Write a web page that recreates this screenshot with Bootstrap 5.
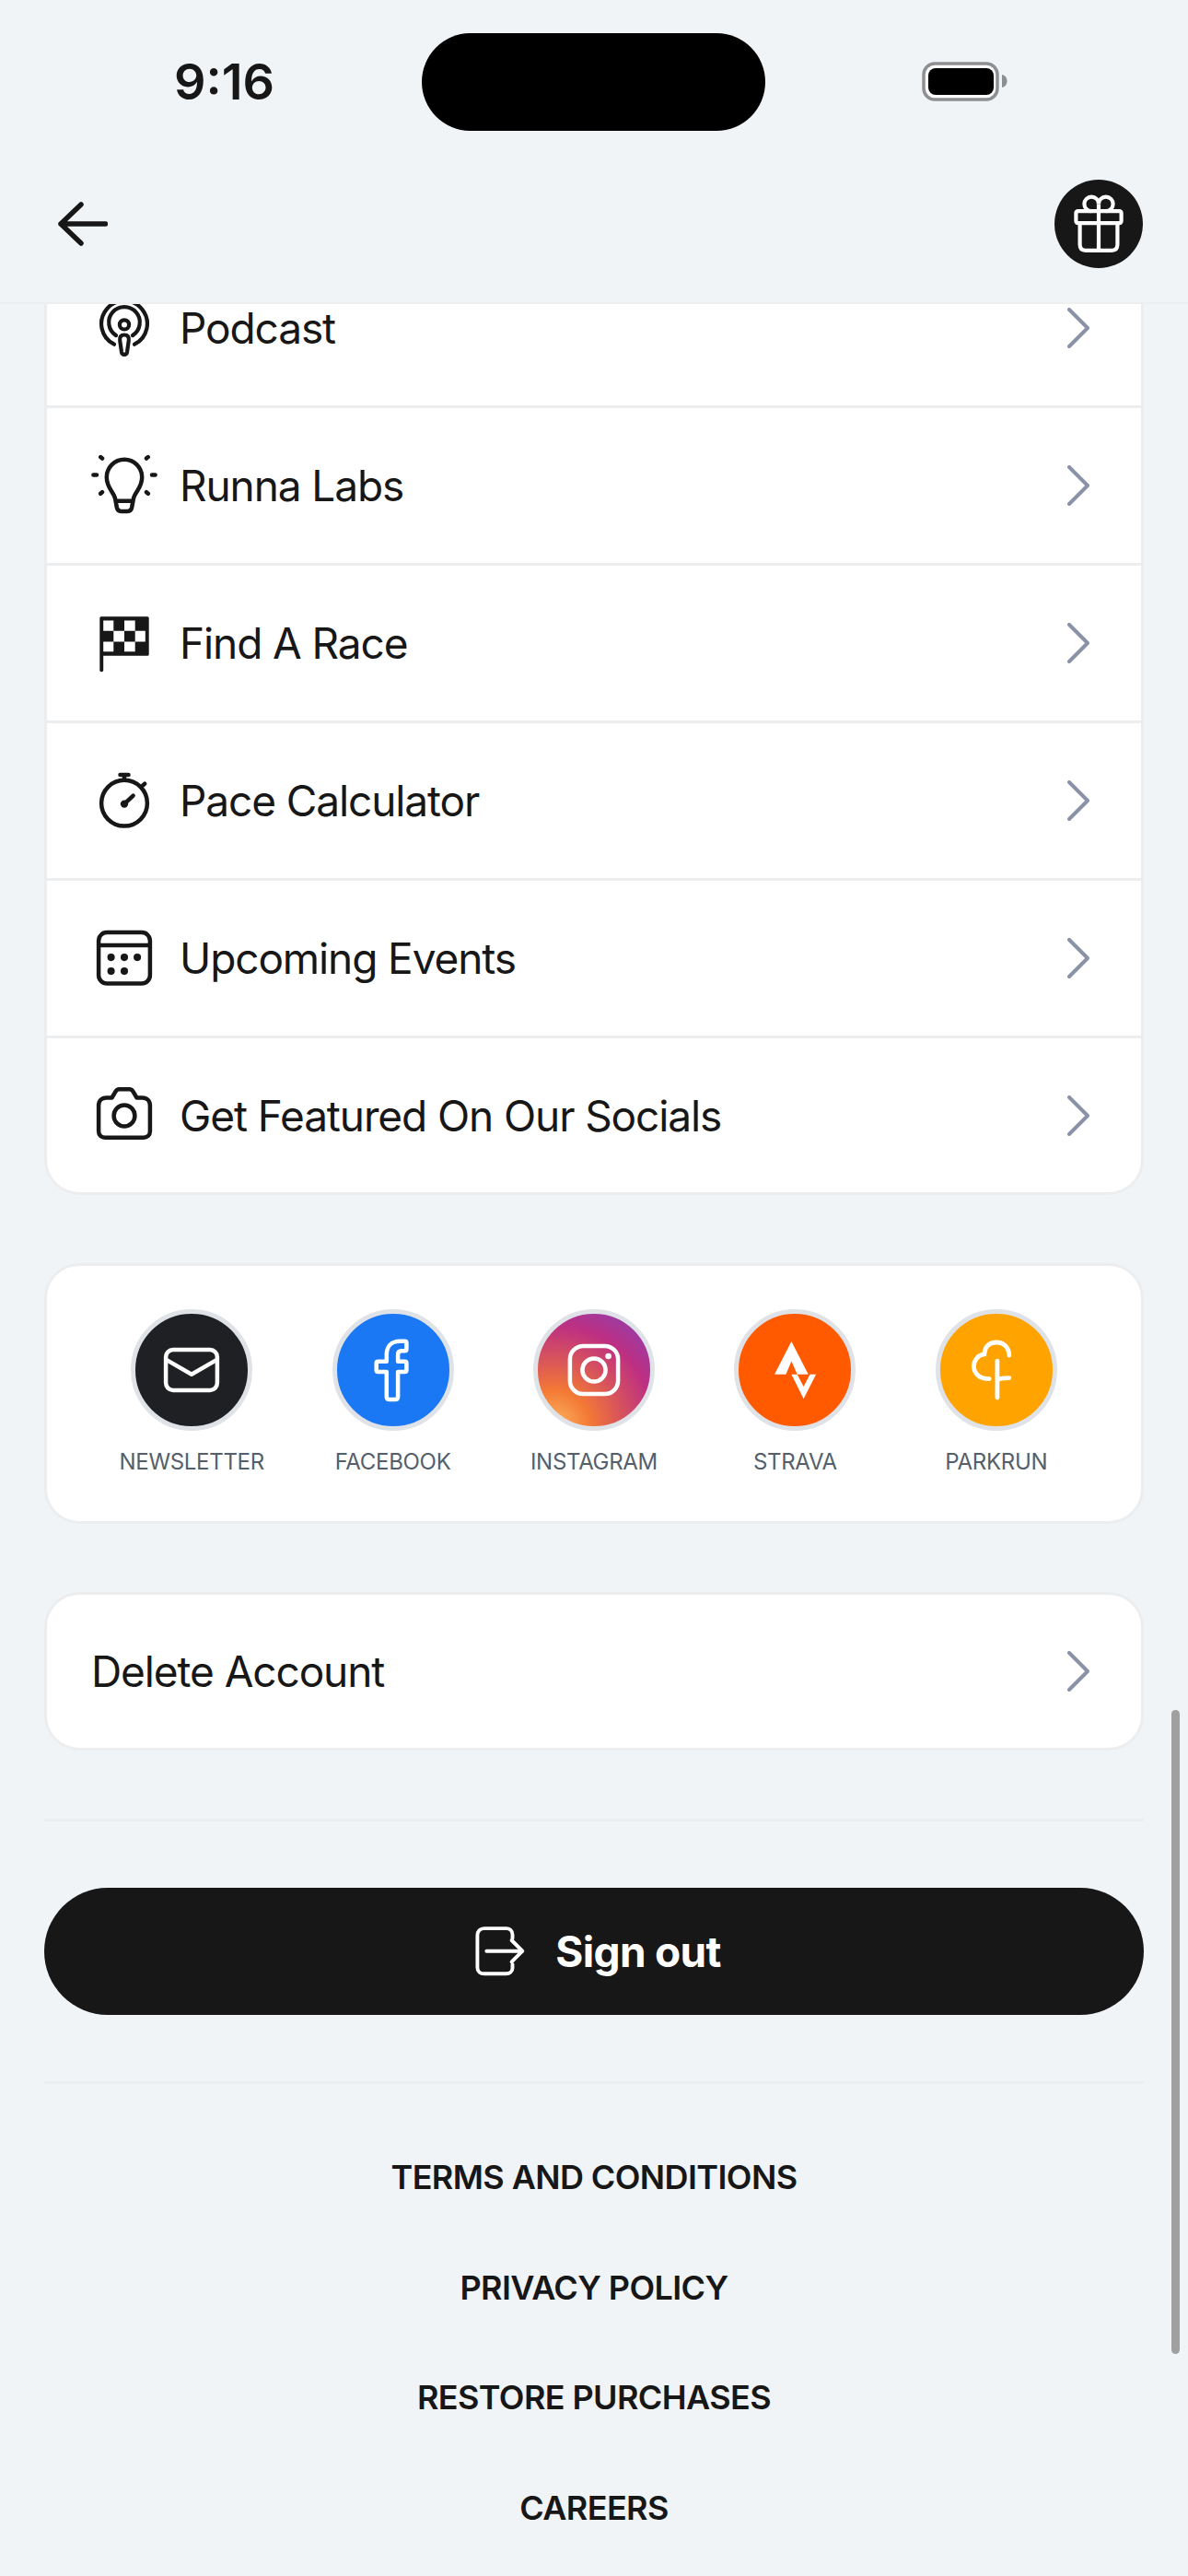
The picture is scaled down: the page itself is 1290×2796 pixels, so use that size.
<!DOCTYPE html>
<html lang="en">

<head>
    <meta charset="UTF-8">
    <meta name="viewport" content="width=device-width, initial-scale=1.0">
    <title>More</title>
    <link rel="stylesheet" href="https://cdn.jsdelivr.net/npm/bootstrap@5.3.3/dist/css/bootstrap.min.css">
    <style>
        html, body { height: 100%; }
        body { background: #f1f4f7; color: #171717; font-family: "Inter", "Liberation Sans", sans-serif; overflow: hidden; }
        .page-wrap { height: 2796px; position: relative; overflow: hidden; }
        .top-area { height: 330px; border-bottom: 2px solid #eceef0; }
        .status-row { padding: 36px 0 0 189px; }
        .clock { width: 269px; font-size: 54px; font-weight: 600; line-height: 106px; }
        .island { width: 373px; height: 106px; background: #000; border-radius: 53px; }
        .battery { margin-left: 170px; }
        .nav-row { padding: 53px 49px 0 63px; }
        .gift-btn { width: 96px; height: 96px; background: #171717; }
        .scroll-area { height: 2466px; padding: 0 48px; }
        .panel { border: 3px solid #ecedef; border-radius: 38px; background: #fff; margin-bottom: 74px; }
        .panel-first { border-top: 0; border-top-left-radius: 0; border-top-right-radius: 0; }
        .list-group { --bs-list-group-border-width: 3px; --bs-list-group-border-color: #ecedef; --bs-list-group-bg: transparent; --bs-list-group-color: #171717; }
        .menu-row { height: 171px; padding: 0 56px 0 48px; font-size: 46px; line-height: 1; letter-spacing: -1.1px; }
        .menu-row:last-child { height: 167px; }
        .menu-row svg.ico { width: 72px; height: 72px; margin-right: 24px; flex-shrink: 0; }
        .menu-row .chev { margin-left: auto; flex-shrink: 0; }
        /* first row sits under the header, scrolled part way out */
        .menu-row.row-cut { height: 113px; padding-bottom: 48px; }
        .row-cut svg.ico { height: 62px; }
        .row-cut span, .row-cut .chev { margin-bottom: 10px; }
        .panel .delete-row { height: 166px; }
        .social-wrap { padding: 47px 48px 49px; }
        .social-dot { width: 132px; height: 132px; border: 5px solid #dfe2e7; }
        .social-name { margin-top: 19px; font-size: 24px; line-height: 30px; color: #555f6b; letter-spacing: -.3px; }
        .dot-news { background: #1e2024; }
        .dot-fb { background: #1a78f4; }
        .dot-ig { background: radial-gradient(circle at 14% 100%, #fcb765 0%, #f47a35 24%, #dc5a55 42%, #bd2f82 68%, #a03a9f 84%, #7a4ab8 100%); }
        .dot-strava { background: #ff5a00; }
        .dot-park { background: #ffa300; }
        .rule { height: 3px; background: #ecedef; }
        .signout { height: 138px; margin: 72px 0 72px; background: #171717; border: 0; color: #fff; font-size: 46px; font-weight: 700; letter-spacing: -.7px; }
        .signout:hover { background: #171717; color: #fff; }
        .foot-links { padding-top: 42px; }
        .foot-links a { display: block; height: 119.5px; line-height: 119.5px; font-size: 36px; font-weight: 600; letter-spacing: -.6px; color: #171717; text-decoration: none; }
        .fake-scroll { position: absolute; left: 1272px; top: 1856px; width: 9px; height: 699px; background: #a0a0a0; border-radius: 5px; }
    </style>
</head>

<body>
    <div class="page-wrap">
        <header class="top-area">
            <div class="status-row d-flex align-items-center">
                <div class="clock">9:16</div>
                <div class="island"></div>
                <svg class="battery" width="95" height="44" viewBox="0 0 95 44">
                    <rect x="2" y="2" width="80" height="39" rx="12" fill="#fff" stroke="#8e8f91" stroke-width="3.5"/>
                    <rect x="7" y="7" width="71" height="29" rx="8" fill="#000"/>
                    <path d="M87 14 C91 15 92.500 18 92.500 21 C92.500 24 91 27 87 28Z" fill="#8e8f91"/>
                </svg>
            </div>
            <div class="nav-row d-flex align-items-center justify-content-between">
                <svg width="54" height="48" viewBox="0 0 54 48" fill="none" stroke="#171717" stroke-width="5.500" stroke-linecap="round" stroke-linejoin="round">
                    <path d="M25 3 L3 24 L25 45 M3 24 H51.500"/>
                </svg>
                <div class="gift-btn rounded-circle d-flex align-items-center justify-content-center">
                    <svg width="72" height="72" viewBox="0 0 24 24" fill="none" stroke="#fff" stroke-width="1.400" stroke-linejoin="round">
                        <rect x="3.800" y="7.400" width="16.400" height="4.300" rx=".7"/>
                        <path d="M5.200 11.700 V19.500 C5.200 20.900 6 21.600 7.300 21.600 H16.700 C18 21.600 18.800 20.900 18.800 19.500 V11.700 M12 4.800 V21.600"/>
                        <path d="M12 4.800 A2.600 2.600 0 1 0 9.400 7.400 M12 4.800 A2.600 2.600 0 1 1 14.600 7.400"/>
                    </svg>
                </div>
            </div>
        </header>

        <main class="scroll-area">
            <div class="card panel panel-first">
                <div class="list-group list-group-flush">
                    <div class="list-group-item menu-row row-cut d-flex align-items-center">
                        <svg class="ico" viewBox="0 3.330 24 20.670" fill="none" stroke="#171717" stroke-width="1.400" stroke-linecap="round">
                            <path d="M8.300 17.900 A8.300 8.300 0 1 1 15.700 17.900"/>
                            <path d="M9 14.700 A5.600 5.600 0 1 1 15 14.700"/>
                            <circle cx="12" cy="10.800" r="1.700"/>
                            <path d="M12 14.500 C13.200 14.500 13.800 15.300 13.600 16.500 L13 20.700 C12.800 21.900 11.200 21.900 11 20.700 L10.400 16.500 C10.200 15.300 10.800 14.500 12 14.500Z"/>
                        </svg>
                        <span>Podcast</span>
                        <svg class="chev" width="24" height="44" viewBox="0 0 24 44" fill="none" stroke="#8a92a8" stroke-width="4" stroke-linecap="round" stroke-linejoin="round"><path d="M2 2 L22 22 L2 42"/></svg>
                    </div>
                    <div class="list-group-item menu-row d-flex align-items-center">
                        <svg class="ico" viewBox="0 0 24 24" fill="none" stroke="#171717" stroke-width="1.500" stroke-linecap="round" stroke-linejoin="round">
                            <path d="M9.300 20 L8.700 16.800 C8.300 14.400 5.600 13 5.600 9 A6.400 6.400 0 0 1 18.400 9 C18.400 13 15.700 14.400 15.300 16.800 L14.700 20 C14.500 20.900 14 21.300 13.200 21.300 H10.800 C10 21.300 9.500 20.900 9.300 20Z M8.900 17.600 H15.100"/>
                            <path d="M3.400 1.700 L4 2.200 M20.600 1.700 L20 2.200 M.8 8.200 H2 M22 8.200 H23.200 M3.400 14.900 L4 14.400 M20.600 14.900 L20 14.400"/>
                        </svg>
                        <span>Runna Labs</span>
                        <svg class="chev" width="24" height="44" viewBox="0 0 24 44" fill="none" stroke="#8a92a8" stroke-width="4" stroke-linecap="round" stroke-linejoin="round"><path d="M2 2 L22 22 L2 42"/></svg>
                    </div>
                    <div class="list-group-item menu-row d-flex align-items-center">
                        <svg class="ico" viewBox="0 0 24 24">
                            <path fill="#171717" d="M3.600 2.450 H20.400 Q20.900 2.450 20.900 3 V16.100 Q20.900 16.600 20.400 16.600 H4.400 V21.800 Q4.400 22.400 3.750 22.400 Q3.100 22.400 3.100 21.800 V3 Q3.100 2.450 3.600 2.450Z"/>
                            <path fill="#fff" d="M4.400 3.800 H8.100 V7.600 H4.400Z M12 3.800 H15.900 V7.600 H12Z M8.100 7.600 H12 V11.500 H8.100Z M15.900 7.600 H19.600 V11.500 H15.900Z M4.400 11.500 H8.100 V15.100 H4.400Z M12 11.500 H15.900 V15.100 H12Z"/>
                        </svg>
                        <span>Find A Race</span>
                        <svg class="chev" width="24" height="44" viewBox="0 0 24 44" fill="none" stroke="#8a92a8" stroke-width="4" stroke-linecap="round" stroke-linejoin="round"><path d="M2 2 L22 22 L2 42"/></svg>
                    </div>
                    <div class="list-group-item menu-row d-flex align-items-center">
                        <svg class="ico" viewBox="0 0 24 24" fill="none" stroke="#171717" stroke-width="1.500" stroke-linecap="round">
                            <circle cx="12" cy="12.900" r="8.300"/>
                            <path d="M10.500 2.700 H13.500 M12 2.700 V4.600 M18.300 6.900 L19.400 5.900"/>
                            <path d="M12 13.200 L15.200 10.200"/>
                            <circle cx="12" cy="13.200" r="1.400" fill="#171717" stroke="none"/>
                        </svg>
                        <span>Pace Calculator</span>
                        <svg class="chev" width="24" height="44" viewBox="0 0 24 44" fill="none" stroke="#8a92a8" stroke-width="4" stroke-linecap="round" stroke-linejoin="round"><path d="M2 2 L22 22 L2 42"/></svg>
                    </div>
                    <div class="list-group-item menu-row d-flex align-items-center">
                        <svg class="ico" viewBox="0 0 24 24" fill="none" stroke="#171717" stroke-width="1.500">
                            <rect x="2.700" y="2.700" width="18.600" height="18.500" rx="3"/>
                            <path d="M2.700 7.300 H21.300"/>
                            <g fill="#171717" stroke="none">
                                <circle cx="7.200" cy="11.700" r="1.350"/><circle cx="12" cy="11.700" r="1.350"/><circle cx="16.700" cy="11.700" r="1.350"/>
                                <circle cx="7.200" cy="16.700" r="1.350"/><circle cx="12" cy="16.700" r="1.350"/>
                            </g>
                        </svg>
                        <span>Upcoming Events</span>
                        <svg class="chev" width="24" height="44" viewBox="0 0 24 44" fill="none" stroke="#8a92a8" stroke-width="4" stroke-linecap="round" stroke-linejoin="round"><path d="M2 2 L22 22 L2 42"/></svg>
                    </div>
                    <div class="list-group-item menu-row d-flex align-items-center">
                        <svg class="ico" viewBox="0 0 24 24" fill="none" stroke="#171717" stroke-width="1.500" stroke-linejoin="round">
                            <path d="M5.500 5.500 H7.500 L8.800 3.300 C9.100 2.700 9.600 2.400 10.200 2.400 H13.800 C14.400 2.400 14.900 2.700 15.200 3.300 L16.500 5.500 H18.500 C20.200 5.500 21.300 6.600 21.300 8.300 V17.700 C21.300 19 20.300 19.900 19 19.900 H5 C3.700 19.900 2.700 19 2.700 17.700 V8.300 C2.700 6.600 3.800 5.500 5.500 5.500Z"/>
                            <circle cx="12" cy="12" r="3.800"/>
                        </svg>
                        <span>Get Featured On Our Socials</span>
                        <svg class="chev" width="24" height="44" viewBox="0 0 24 44" fill="none" stroke="#8a92a8" stroke-width="4" stroke-linecap="round" stroke-linejoin="round"><path d="M2 2 L22 22 L2 42"/></svg>
                    </div>
                </div>
            </div>

            <div class="card panel social-wrap">
                <div class="row row-cols-5 g-0 text-center">
                    <div class="col d-flex flex-column align-items-center">
                        <div class="social-dot dot-news rounded-circle d-flex align-items-center justify-content-center">
                            <svg width="72" height="72" viewBox="0 0 24 24" fill="none" stroke="#fff" stroke-width="1.500" stroke-linejoin="round">
                                <rect x="2.700" y="4.700" width="18.600" height="14.600" rx="2.600"/>
                                <path d="M2.700 8.200 L12 13.600 L21.300 8.200"/>
                            </svg>
                        </div>
                        <div class="social-name">NEWSLETTER</div>
                    </div>
                    <div class="col d-flex flex-column align-items-center">
                        <div class="social-dot dot-fb rounded-circle d-flex align-items-center justify-content-center">
                            <svg width="72" height="72" viewBox="0 0 24 24" fill="none" stroke="#fff" stroke-width="1.500" stroke-linejoin="round">
                                <path d="M9.600 8.900 V6.500 C9.600 3.400 11.400 1.600 14.400 1.600 H16.200 Q16.800 1.600 16.800 2.200 V4.500 Q16.800 5.100 16.200 5.100 H15 C14.100 5.100 13.700 5.500 13.700 6.400 V8.900 H16.200 Q16.800 8.900 16.800 9.500 V12.100 Q16.800 12.700 16.200 12.700 H13.700 V21.700 Q13.700 22.700 12.700 22.700 H10.600 Q9.600 22.700 9.600 21.700 V12.700 H6.500 Q5.900 12.700 5.900 12.100 V9.500 Q5.900 8.900 6.500 8.900Z"/>
                            </svg>
                        </div>
                        <div class="social-name">FACEBOOK</div>
                    </div>
                    <div class="col d-flex flex-column align-items-center">
                        <div class="social-dot dot-ig rounded-circle d-flex align-items-center justify-content-center">
                            <svg width="72" height="72" viewBox="0 0 24 24" fill="none" stroke="#fff" stroke-width="1.500">
                                <rect x="3.300" y="3.300" width="17.400" height="17.400" rx="4.800"/>
                                <circle cx="12" cy="12" r="4.200"/>
                                <circle cx="17.200" cy="7" r="1.100" fill="#fff" stroke="none"/>
                            </svg>
                        </div>
                        <div class="social-name">INSTAGRAM</div>
                    </div>
                    <div class="col d-flex flex-column align-items-center">
                        <div class="social-dot dot-strava rounded-circle d-flex align-items-center justify-content-center">
                            <svg width="72" height="72" viewBox="0 0 24 24" fill="#fff">
                                <polygon points="10.800,1.670 4.670,13.600 8.800,13.600 10.800,8.800 12.900,13.600 16.900,13.600"/>
                                <polygon points="10.800,13.600 15.200,22.400 19.700,13.600 17.500,13.600 15.200,18 12.900,13.600"/>
                            </svg>
                        </div>
                        <div class="social-name">STRAVA</div>
                    </div>
                    <div class="col d-flex flex-column align-items-center">
                        <div class="social-dot dot-park rounded-circle d-flex align-items-center justify-content-center">
                            <svg width="72" height="72" viewBox="0 0 24 24" fill="none" stroke="#fff" stroke-width="1.600" stroke-linecap="round">
                                <path d="M12.300 8.700 V22 M12.300 15.900 C12.600 15.100 14 15 16.600 14.900"/>
                                <path d="M16.600 6.700 C16.600 3.700 14.500 2 12 2 C9.500 2 7.700 3.500 7.600 6.300 C5.400 6.500 3.800 8.500 3.800 10.700 C3.800 13.300 6 15.200 9.400 15.200"/>
                            </svg>
                        </div>
                        <div class="social-name">PARKRUN</div>
                    </div>
                </div>
            </div>

            <div class="card panel">
                <div class="menu-row delete-row d-flex align-items-center">
                    <span>Delete Account</span>
                    <svg class="chev" width="24" height="44" viewBox="0 0 24 44" fill="none" stroke="#8a92a8" stroke-width="4" stroke-linecap="round" stroke-linejoin="round"><path d="M2 2 L22 22 L2 42"/></svg>
                </div>
            </div>

            <div class="rule"></div>
            <button type="button" class="btn signout rounded-pill w-100 d-flex align-items-center justify-content-center gap-4">
                <svg width="72" height="72" viewBox="0 0 24 24" fill="none" stroke="#fff" stroke-width="1.300" stroke-linecap="round" stroke-linejoin="round">
                    <path d="M16.500 7.300 V6 C16.500 4.600 15.500 3.700 14.200 3.700 H6.300 C4.800 3.700 3.800 4.700 3.800 6.200 V17.800 C3.800 19.300 4.800 20.100 6.300 20.100 H14.200 C15.500 20.100 16.500 19.300 16.500 18 V16.700"/>
                    <path d="M7.100 11.900 H20.100 M16.200 8 L20.100 11.900 L16.200 15.800"/>
                </svg>
                <span>Sign out</span>
            </button>
            <div class="rule"></div>

            <nav class="foot-links text-center">
                <a href="#">TERMS AND CONDITIONS</a>
                <a href="#">PRIVACY POLICY</a>
                <a href="#">RESTORE PURCHASES</a>
                <a href="#">CAREERS</a>
            </nav>
        </main>

        <div class="fake-scroll"></div>
    </div>

    <script src="https://cdn.jsdelivr.net/npm/bootstrap@5.3.3/dist/js/bootstrap.bundle.min.js"></script>
</body>

</html>
